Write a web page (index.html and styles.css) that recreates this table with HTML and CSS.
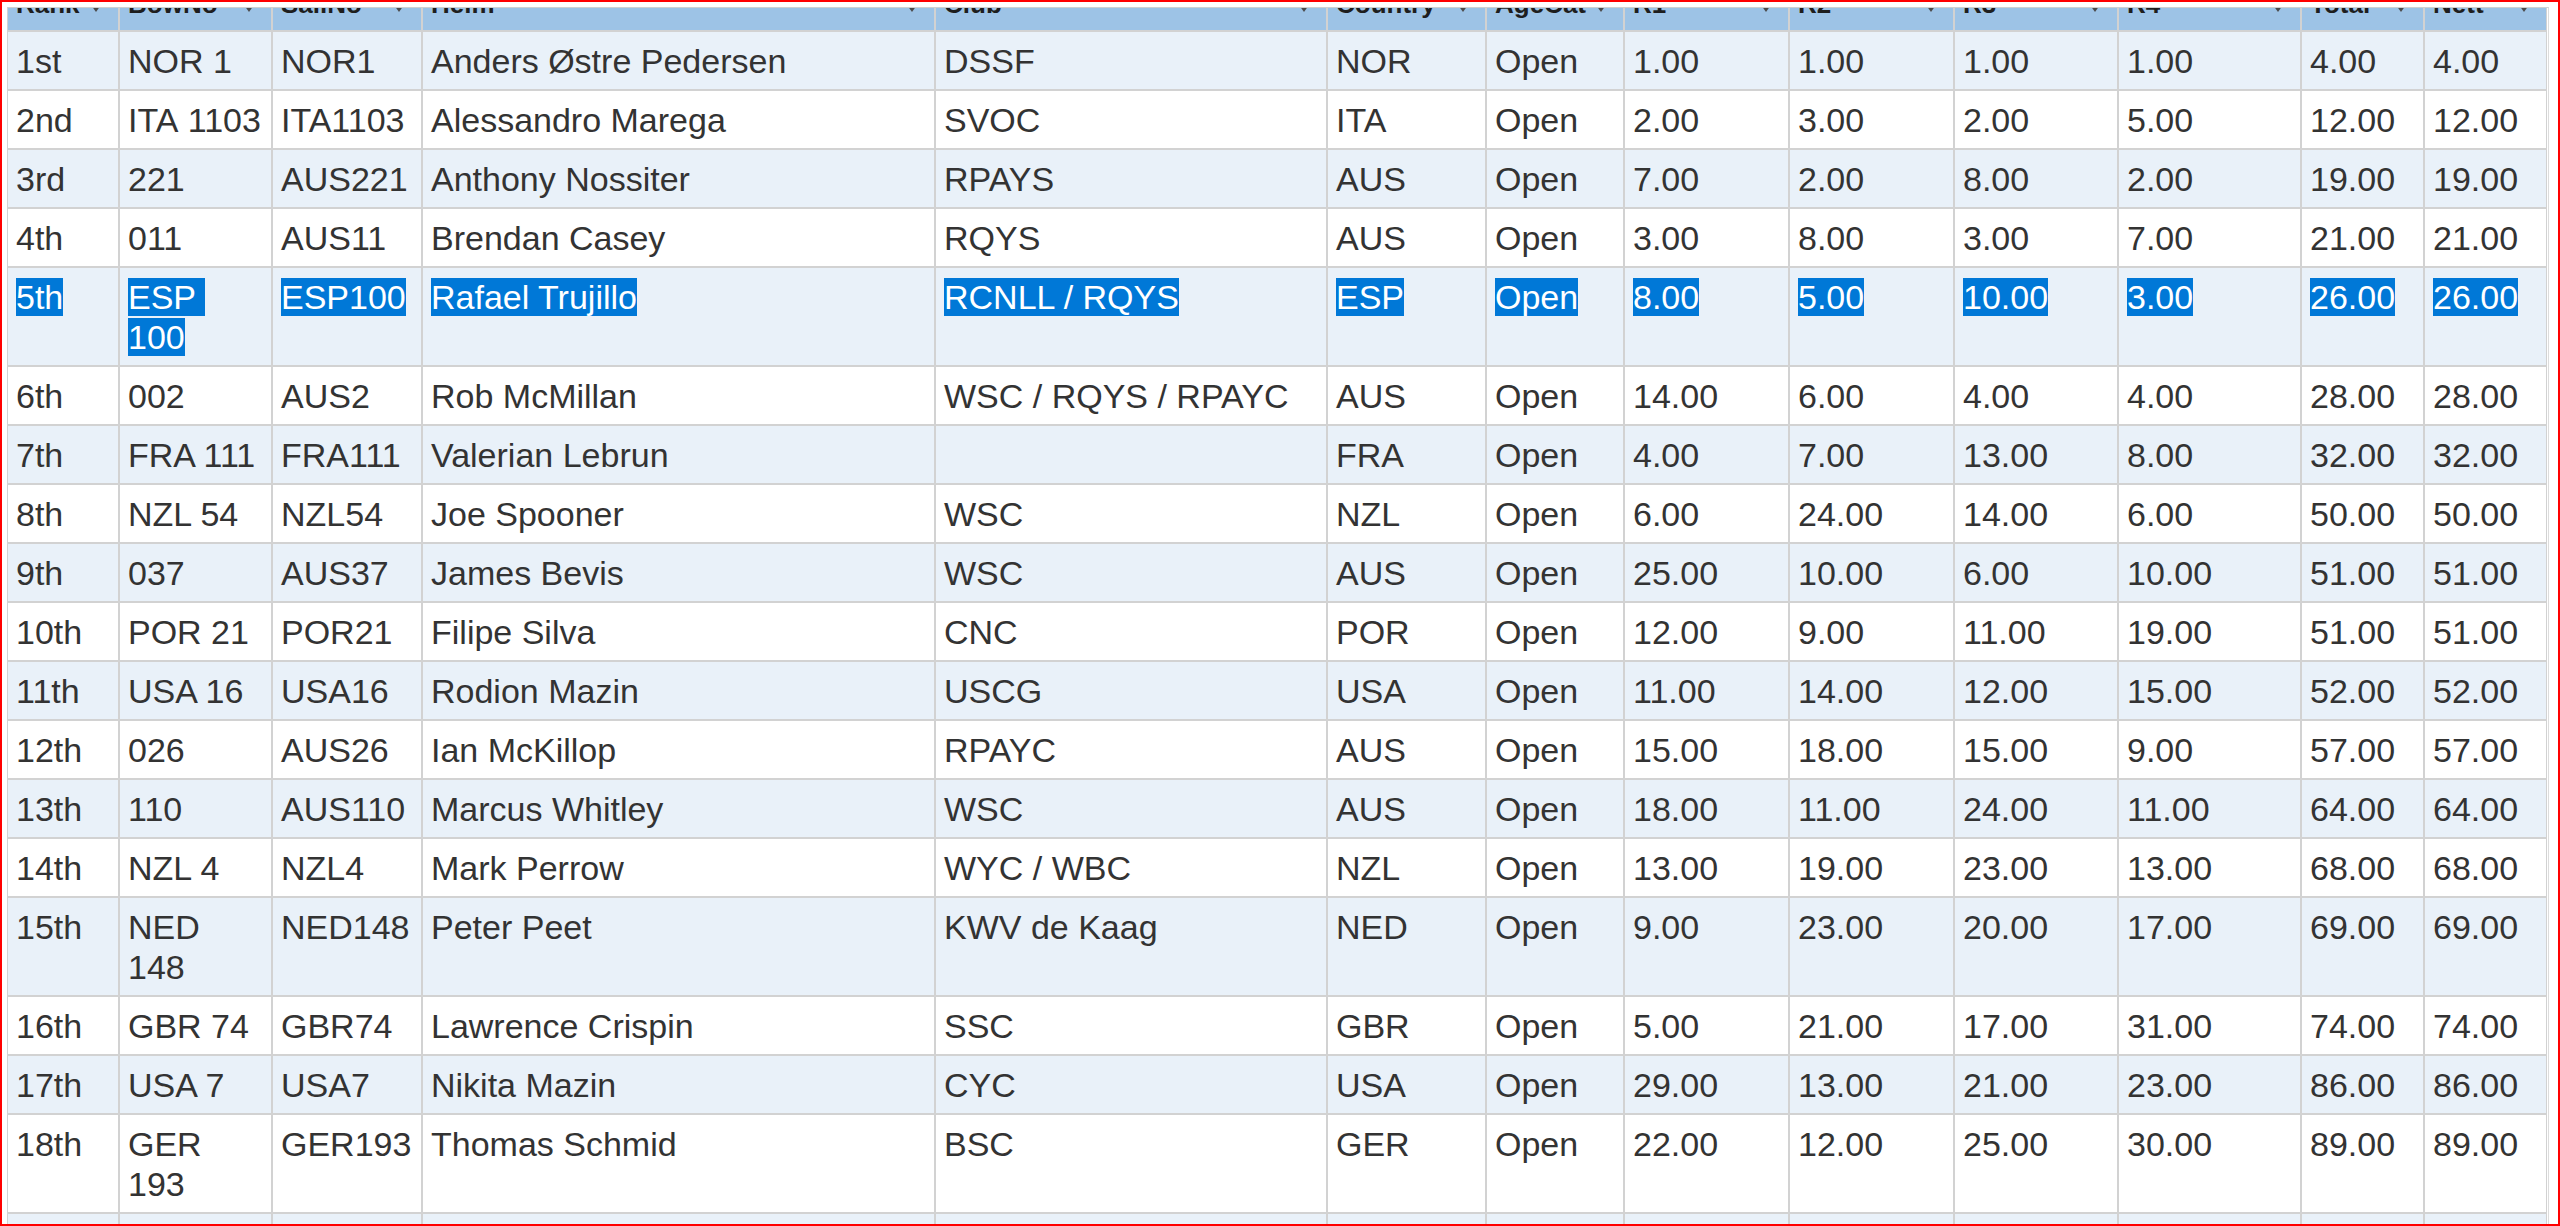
FILE: index.html
```html
<!DOCTYPE html>
<html lang="en">
<head>
<meta charset="utf-8">
<title>Results</title>
<link rel="stylesheet" href="styles.css">
</head>
<body>
<div class="frame">
  <div class="scroller">
    <table class="results">
      <thead>
        <tr>
          <th class="w-rank">Rank</th>
          <th class="w-bow">BowNo</th>
          <th class="w-sail">SailNo</th>
          <th class="w-helm">Helm</th>
          <th class="w-club">Club</th>
          <th class="w-country">Country</th>
          <th class="w-age">AgeCat</th>
          <th class="w-r1">R1</th>
          <th class="w-r2">R2</th>
          <th class="w-r3">R3</th>
          <th class="w-r4">R4</th>
          <th class="w-tot">Total</th>
          <th class="w-nett">Nett</th>
        </tr>
      </thead>
      <tbody>
        <tr><td>1st</td><td>NOR 1</td><td>NOR1</td><td>Anders Østre Pedersen</td><td>DSSF</td><td>NOR</td><td>Open</td><td>1.00</td><td>1.00</td><td>1.00</td><td>1.00</td><td>4.00</td><td>4.00</td></tr>
        <tr><td>2nd</td><td>ITA&nbsp;1103</td><td>ITA1103</td><td>Alessandro Marega</td><td>SVOC</td><td>ITA</td><td>Open</td><td>2.00</td><td>3.00</td><td>2.00</td><td>5.00</td><td>12.00</td><td>12.00</td></tr>
        <tr><td>3rd</td><td>221</td><td>AUS221</td><td>Anthony Nossiter</td><td>RPAYS</td><td>AUS</td><td>Open</td><td>7.00</td><td>2.00</td><td>8.00</td><td>2.00</td><td>19.00</td><td>19.00</td></tr>
        <tr><td>4th</td><td>011</td><td>AUS11</td><td>Brendan Casey</td><td>RQYS</td><td>AUS</td><td>Open</td><td>3.00</td><td>8.00</td><td>3.00</td><td>7.00</td><td>21.00</td><td>21.00</td></tr>
        <tr><td><span class="sel">5th</span></td><td><span class="sel">ESP&nbsp;<br>100</span></td><td><span class="sel">ESP100</span></td><td><span class="sel">Rafael Trujillo</span></td><td><span class="sel">RCNLL / RQYS</span></td><td><span class="sel">ESP</span></td><td><span class="sel">Open</span></td><td><span class="sel">8.00</span></td><td><span class="sel">5.00</span></td><td><span class="sel">10.00</span></td><td><span class="sel">3.00</span></td><td><span class="sel">26.00</span></td><td><span class="sel">26.00</span></td></tr>
        <tr><td>6th</td><td>002</td><td>AUS2</td><td>Rob McMillan</td><td>WSC / RQYS / RPAYC</td><td>AUS</td><td>Open</td><td>14.00</td><td>6.00</td><td>4.00</td><td>4.00</td><td>28.00</td><td>28.00</td></tr>
        <tr><td>7th</td><td>FRA 111</td><td>FRA111</td><td>Valerian Lebrun</td><td></td><td>FRA</td><td>Open</td><td>4.00</td><td>7.00</td><td>13.00</td><td>8.00</td><td>32.00</td><td>32.00</td></tr>
        <tr><td>8th</td><td>NZL 54</td><td>NZL54</td><td>Joe Spooner</td><td>WSC</td><td>NZL</td><td>Open</td><td>6.00</td><td>24.00</td><td>14.00</td><td>6.00</td><td>50.00</td><td>50.00</td></tr>
        <tr><td>9th</td><td>037</td><td>AUS37</td><td>James Bevis</td><td>WSC</td><td>AUS</td><td>Open</td><td>25.00</td><td>10.00</td><td>6.00</td><td>10.00</td><td>51.00</td><td>51.00</td></tr>
        <tr><td>10th</td><td>POR 21</td><td>POR21</td><td>Filipe Silva</td><td>CNC</td><td>POR</td><td>Open</td><td>12.00</td><td>9.00</td><td>11.00</td><td>19.00</td><td>51.00</td><td>51.00</td></tr>
        <tr><td>11th</td><td>USA 16</td><td>USA16</td><td>Rodion Mazin</td><td>USCG</td><td>USA</td><td>Open</td><td>11.00</td><td>14.00</td><td>12.00</td><td>15.00</td><td>52.00</td><td>52.00</td></tr>
        <tr><td>12th</td><td>026</td><td>AUS26</td><td>Ian McKillop</td><td>RPAYC</td><td>AUS</td><td>Open</td><td>15.00</td><td>18.00</td><td>15.00</td><td>9.00</td><td>57.00</td><td>57.00</td></tr>
        <tr><td>13th</td><td>110</td><td>AUS110</td><td>Marcus Whitley</td><td>WSC</td><td>AUS</td><td>Open</td><td>18.00</td><td>11.00</td><td>24.00</td><td>11.00</td><td>64.00</td><td>64.00</td></tr>
        <tr><td>14th</td><td>NZL 4</td><td>NZL4</td><td>Mark Perrow</td><td>WYC / WBC</td><td>NZL</td><td>Open</td><td>13.00</td><td>19.00</td><td>23.00</td><td>13.00</td><td>68.00</td><td>68.00</td></tr>
        <tr><td>15th</td><td>NED 148</td><td>NED148</td><td>Peter Peet</td><td>KWV de Kaag</td><td>NED</td><td>Open</td><td>9.00</td><td>23.00</td><td>20.00</td><td>17.00</td><td>69.00</td><td>69.00</td></tr>
        <tr><td>16th</td><td>GBR 74</td><td>GBR74</td><td>Lawrence Crispin</td><td>SSC</td><td>GBR</td><td>Open</td><td>5.00</td><td>21.00</td><td>17.00</td><td>31.00</td><td>74.00</td><td>74.00</td></tr>
        <tr><td>17th</td><td>USA 7</td><td>USA7</td><td>Nikita Mazin</td><td>CYC</td><td>USA</td><td>Open</td><td>29.00</td><td>13.00</td><td>21.00</td><td>23.00</td><td>86.00</td><td>86.00</td></tr>
        <tr><td>18th</td><td>GER 193</td><td>GER193</td><td>Thomas Schmid</td><td>BSC</td><td>GER</td><td>Open</td><td>22.00</td><td>12.00</td><td>25.00</td><td>30.00</td><td>89.00</td><td>89.00</td></tr>
        <tr><td>19th</td><td>AUS 9</td><td>AUS9</td><td>Peter Hackett</td><td>RPAYC</td><td>AUS</td><td>Open</td><td>16.00</td><td>20.00</td><td>19.00</td><td>35.00</td><td>90.00</td><td>90.00</td></tr>
      </tbody>
    </table>
  </div>
</div>
</body>
</html>
```
FILE: styles.css
```css
html, body {
  margin: 0;
  padding: 0;
  background: #ffffff;
}

.frame {
  box-sizing: border-box;
  width: 2560px;
  height: 1226px;
  border: 2px solid #ff0000;
  padding: 5px 9px 0 5px;
  display: flex;
  flex-direction: column;
  overflow: hidden;
  background: #ffffff;
}

.scroller {
  flex: 1;
  min-height: 0;
  overflow: hidden;
  border-top: 1px solid #d0d0d0;
  border-right: 1px solid #dcdcdc;
  padding-right: 1px;
}

.results {
  table-layout: fixed;
  width: 2540px;
  border-collapse: separate;
  border-spacing: 0;
  margin-top: -28px;
  font-family: "Liberation Sans", Arial, sans-serif;
  color: #333333;
}

.results th,
.results td {
  box-sizing: border-box;
  border: 1px solid #d2d2d2;
  text-align: left;
  vertical-align: top;
}

.results th {
  position: relative;
  background: #9dc3e6;
  color: #1e1e1e;
  font-size: 26px;
  font-weight: bold;
  line-height: 30px;
  padding: 8px 8px 11px 8px;
  white-space: nowrap;
}

.results th::after {
  content: "";
  position: absolute;
  right: 17px;
  top: 24px;
  width: 0;
  height: 0;
  border-left: 5px solid transparent;
  border-right: 5px solid transparent;
  border-top: 7px solid #4a4a4a;
}

.results td {
  font-size: 34px;
  line-height: 40px;
  padding: 9px 8px 8px 8px;
  background: #ffffff;
}

.results tbody tr:nth-child(odd) td {
  background: #e9f1f9;
}

.sel {
  background: #0078d7;
  color: #ffffff;
}

.w-rank { width: 112px; }
.w-bow { width: 153px; }
.w-sail { width: 150px; }
.w-helm { width: 513px; }
.w-club { width: 392px; }
.w-country { width: 159px; }
.w-age { width: 138px; }
.w-r1 { width: 165px; }
.w-r2 { width: 165px; }
.w-r3 { width: 164px; }
.w-r4 { width: 183px; }
.w-tot { width: 123px; }
.w-nett { width: 123px; }
```
